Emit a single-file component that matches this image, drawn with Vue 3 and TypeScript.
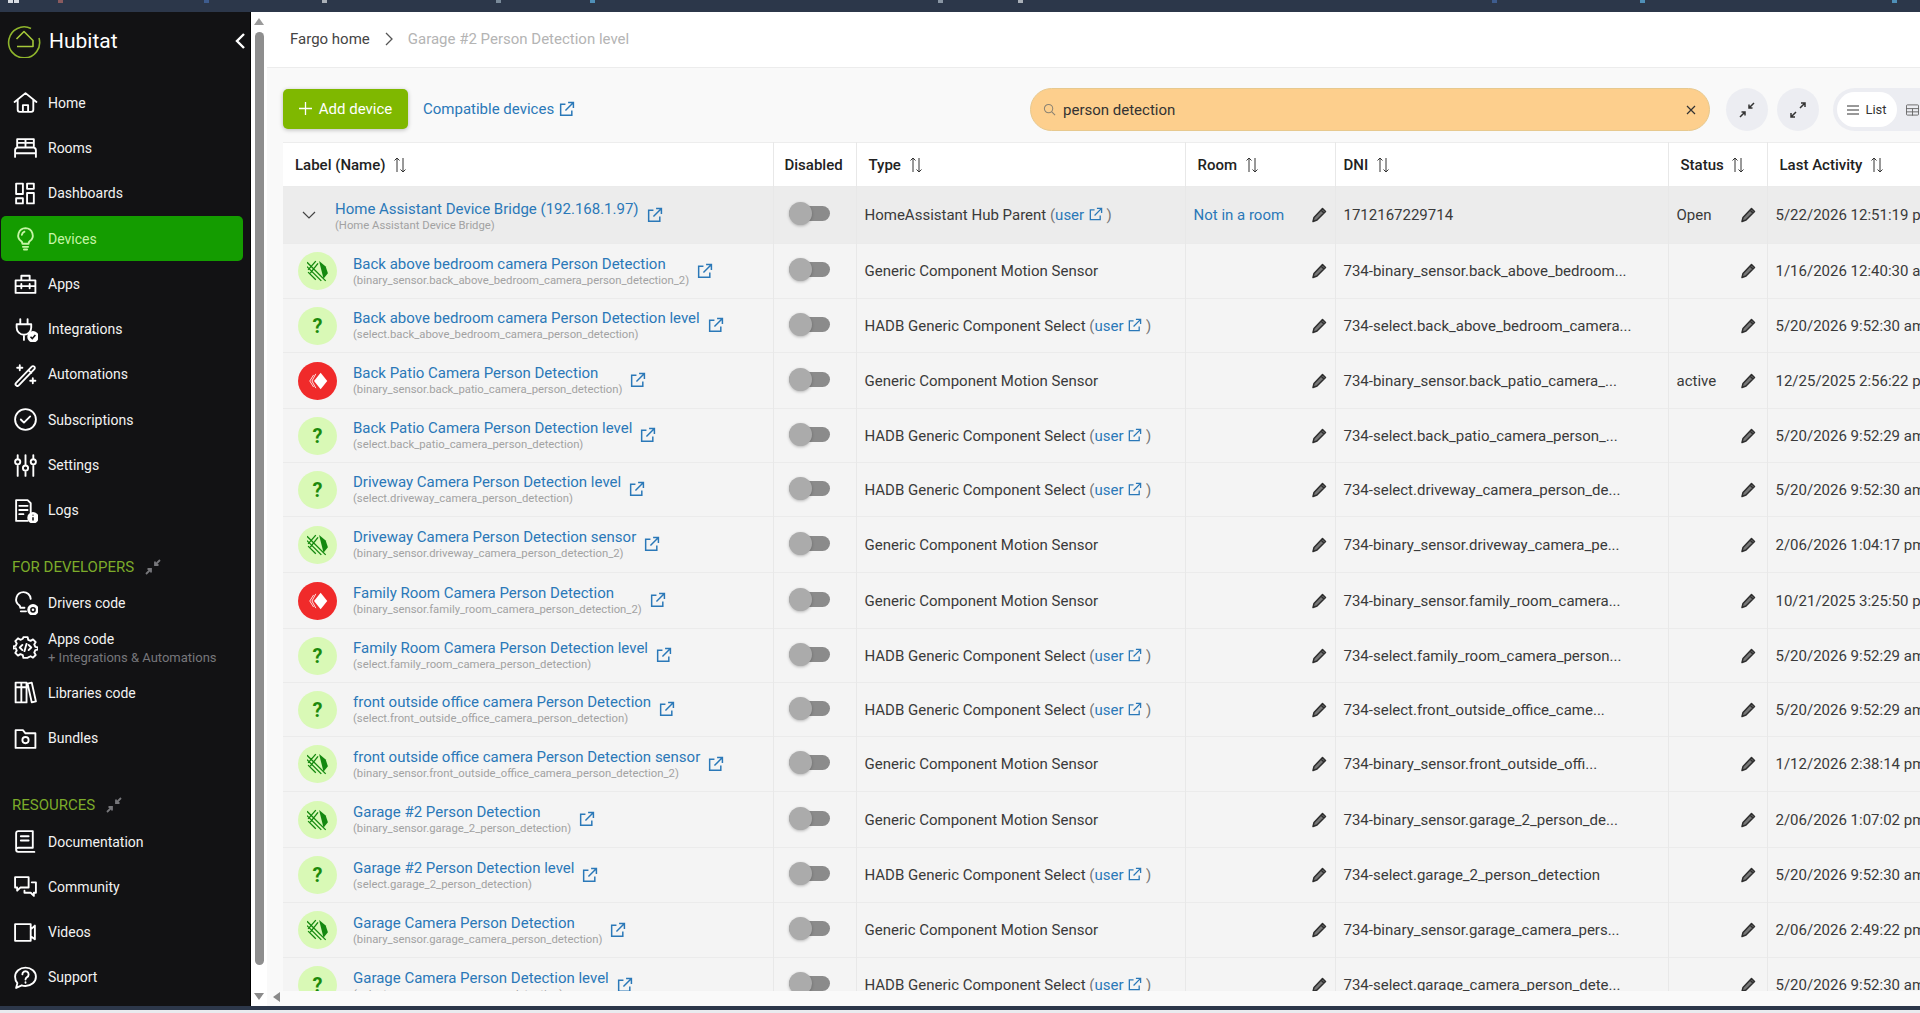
<template>
  <div class="screen">
    <div class="topbar">
      <i v-for="mark in topMarks" :key="mark.x" :style="{ left: mark.x + 'px', background: mark.color }"></i>
    </div>
    <div class="body">
      <aside class="sidebar">
        <div class="brand">
          <svg class="logo" viewBox="0 0 34 34" fill="none" stroke="#8fb52c" stroke-width="1.6">
            <path d="M24 4.500A15.500 15.500 0 1 0 32 14" />
            <path d="M9.500 15 17 7.500 26 16.500V22.500H10" stroke-linejoin="round" stroke="#a6c83a" />
          </svg>
          <span class="brand-name">Hubitat</span>
          <svg class="collapse" viewBox="0 0 12 18" fill="none" stroke="#fff" stroke-width="2.4"><path d="M10 2 3 9l7 7" /></svg>
        </div>

        <nav class="nav">
          <a v-for="item in mainNav" :key="item.label" class="nav-item" :class="{ active: item.label === 'Devices' }">
            <svg class="nav-icon" viewBox="0 0 24 24">
              <path class="ln" :d="item.d" />
              <template v-if="item.badge">
                <circle cx="19.2" cy="19" r="5.5" fill="#fff" />
                <path class="bd" :d="item.badge" />
              </template>
            </svg>
            <span>{{ item.label }}</span>
          </a>
        </nav>

        <div class="section-title dev">FOR DEVELOPERS
          <svg class="shrink" viewBox="0 0 16 16"><path :d="shrinkPath" /></svg>
        </div>
        <nav class="nav">
          <a v-for="item in devNav" :key="item.label" class="nav-item" :class="{ double: item.sub }">
            <svg class="nav-icon" viewBox="0 0 24 24">
              <path class="ln" :d="item.d" />
              <template v-if="item.badge">
                <circle cx="19.2" cy="19" r="5.5" fill="#fff" />
                <path class="bd" :d="item.badge" />
              </template>
            </svg>
            <span class="stack">{{ item.label }}<small v-if="item.sub">{{ item.sub }}</small></span>
          </a>
        </nav>

        <div class="section-title res">RESOURCES
          <svg class="shrink" viewBox="0 0 16 16"><path :d="shrinkPath" /></svg>
        </div>
        <nav class="nav">
          <a v-for="item in resourceNav" :key="item.label" class="nav-item">
            <svg class="nav-icon" viewBox="0 0 24 24"><path class="ln" :d="item.d" /></svg>
            <span>{{ item.label }}</span>
          </a>
        </nav>
      </aside>

      <div class="vscroll">
        <span class="arrow up"></span>
        <span class="thumb"></span>
        <span class="arrow down"></span>
      </div>

      <main class="main">
        <header class="crumbs">
          <span class="crumb-home">Fargo home</span>
          <svg class="crumb-sep" viewBox="0 0 8 14" fill="none" stroke="#555" stroke-width="1.3"><path d="m1 1 6 6-6 6" /></svg>
          <span class="crumb-page">Garage #2 Person Detection level</span>
        </header>

        <div class="toolbar">
          <div class="toolbar-left">
            <button class="add-btn">
              <svg viewBox="0 0 14 14" fill="none" stroke="#fff" stroke-width="1.4"><path d="M7 0v14M0 7h14" /></svg>
              Add device
            </button>
            <a class="compat">Compatible devices
              <svg class="ext" viewBox="0 0 16 16"><path :d="extPath" /></svg>
            </a>
          </div>
          <div class="search">
            <svg class="search-icon" viewBox="0 0 14 14" fill="none" stroke="#8a8272" stroke-width="1.1"><circle cx="6" cy="6" r="4.5" /><path d="m9.500 9.500 3.500 3.500" /></svg>
            <span class="search-text">person detection</span>
            <svg class="search-clear" viewBox="0 0 10 10" fill="none" stroke="#333" stroke-width="1.2"><path d="m1 1 8 8M9 1 1 9" /></svg>
          </div>
          <button class="round-btn first">
            <svg viewBox="0 0 16 16"><path :d="shrinkPath" /></svg>
          </button>
          <button class="round-btn">
            <svg viewBox="0 0 16 16"><path d="M10 6l5-5M11 1h4v4M6 10l-5 5M1 11v4h4" /></svg>
          </button>
          <div class="view-toggle">
            <span class="view-list">
              <svg viewBox="0 0 12 12" fill="none" stroke="#333" stroke-width="1"><path d="M0 2h12M0 6h12M0 10h12" /></svg>
              List
            </span>
            <svg class="view-grid" viewBox="0 0 14 12" fill="none" stroke="#666" stroke-width="1"><rect x="0.5" y="0.5" width="13" height="11" rx="1" /><path d="M0 4.500h14M0 8h14M7 4.500V12" /></svg>
          </div>
        </div>

        <div class="table-wrap">
          <table class="devices">
            <colgroup>
              <col style="width: 490px" />
              <col style="width: 83px" />
              <col style="width: 329px" />
              <col style="width: 150px" />
              <col style="width: 333px" />
              <col style="width: 99px" />
              <col style="width: 220px" />
            </colgroup>
            <thead>
              <tr>
                <th v-for="col in columns" :key="col">
                  {{ col }}
                  <svg v-if="col !== 'Disabled'" class="sort" viewBox="0 0 14 16"><path d="M4 15V1M1.500 3.500 4 1l2.500 2.500M10 1v14M7.500 12.500 10 15l2.500-2.500" /></svg>
                </th>
              </tr>
            </thead>
            <tbody>
              <tr v-for="row in rows" :key="row.name" :class="{ parent: row.kind === 'parent' }" :style="{ height: row.h + 'px' }">
                <td class="label-cell">
                  <div class="label-inner">
                    <svg v-if="row.kind === 'parent'" class="chevron" viewBox="0 0 14 8" fill="none" stroke="#444" stroke-width="1.2"><path d="m1 1 6 6 6-6" /></svg>
                    <span v-else class="dev-icon" :class="row.kind">
                      <template v-if="row.kind === 'unknown'">?</template>
                      <svg v-else-if="row.kind === 'motion'" viewBox="0 0 20 20">
                        <path d="M11 1l6 5 2 6-4 5z" fill="#14890f" />
                        <path d="m0 2 17 17M0 6l13 13M1 11l7 7M1 9l7-8M3 12l7-9" stroke="#14890f" stroke-width="1.2" fill="none" />
                      </svg>
                      <svg v-else viewBox="0 0 20 20">
                        <path d="M12.400 2.500 18.400 10l-6 7.500-6-7.500z" fill="#fff" />
                        <path d="M6 4.500 2.500 10 6 15.500M8 3.500 4.500 10 8 16.500" stroke="#fff" stroke-width="0.9" fill="none" opacity="0.85" />
                      </svg>
                    </span>
                    <div class="names">
                      <a class="name">{{ row.name }}</a>
                      <span class="entity">({{ row.entity }})</span>
                    </div>
                    <svg class="ext row-ext" viewBox="0 0 16 16"><path :d="extPath" /></svg>
                  </div>
                </td>
                <td class="toggle-cell"><span class="toggle"><i></i></span></td>
                <td>
                  {{ row.type }}
                  <span v-if="row.user" class="user">(<a>user <svg class="ext mini" viewBox="0 0 16 16"><path :d="extPath" /></svg></a> )</span>
                </td>
                <td>
                  <div class="edit-cell room">
                    <a v-if="row.kind === 'parent'">Not in a room</a>
                    <svg class="pencil" viewBox="0 0 16 16"><path :d="pencilPath" /></svg>
                  </div>
                </td>
                <td>{{ row.dni }}</td>
                <td class="status-cell">
                  <div class="edit-cell">
                    <span>{{ row.status }}</span>
                    <svg class="pencil" viewBox="0 0 16 16"><path :d="pencilPath" /></svg>
                  </div>
                </td>
                <td class="nowrap">{{ row.activity }}</td>
              </tr>
            </tbody>
          </table>
        </div>

        <div class="hscroll"><span class="arrow left"></span></div>
      </main>
    </div>
    <div class="bottombar"></div>
  </div>
</template>

<script setup lang="ts">
type Kind = 'parent' | 'motion' | 'unknown' | 'alert'

interface NavItem {
  label: string
  d: string
  badge?: string
  sub?: string
}

interface Row {
  kind: Kind
  name: string
  entity: string
  type: string
  user: boolean
  dni: string
  status: string
  activity: string
  h: number
}

const extPath = 'M7 3H2.500v10.500H13V9M9.500 1.500h5v5M14.500 1.500 7 9'
const pencilPath = 'M11.500 1.500 14.500 4.500 6 13 2 14.500 3 10.500zM10 3l3 3'
const shrinkPath = 'M15 1 10 6M10 2.500V6h3.500M1 15l5-5M2.500 10H6v3.500'

// clipped taskbar icons peeking in at the top edge
const topMarks = [
  { x: 8, color: '#d8dce2' },
  { x: 14, color: '#d8dce2' },
  { x: 58, color: '#8a5a5e' },
  { x: 204, color: '#3e5c8e' },
  { x: 322, color: '#aab0b8' },
  { x: 496, color: '#7a8a9a' },
  { x: 590, color: '#4f8fb8' },
  { x: 938, color: '#8a96a4' },
  { x: 1018, color: '#aab0b8' },
  { x: 1492, color: '#3e5c8e' },
  { x: 1640, color: '#4f8fb8' },
  { x: 1892, color: '#4f8fb8' },
]

const mainNav: NavItem[] = [
  { label: 'Home', d: 'M1.500 11.500 12 3l10.500 8.500M4.500 9.500V19a2 2 0 0 0 2 2h11a2 2 0 0 0 2-2V9.500M9.500 21v-6.500h5V21' },
  { label: 'Rooms', d: 'M4 11V4h16v7M2 21v-6a3 3 0 0 1 2-3h16a3 3 0 0 1 2 3v6M2 17.500h20M12 4v7M5.500 7.500h5M13.500 7.500h5' },
  { label: 'Dashboards', d: 'M3 2.500h6.500v10H3zM13.500 2.500H20v5h-6.500zM3 16.500h6.500v5H3zM13.500 11.500H20v10h-6.500z' },
  { label: 'Devices', d: 'M12 2a7 7 0 0 0-4 12.700c.8.700 1 1.500 1 2.300h6c0-.8.2-1.600 1-2.300A7 7 0 0 0 12 2zM9.500 20h5M10.500 22.500h3M8.500 8.500A4 4 0 0 1 11 5.500' },
  { label: 'Apps', d: 'M2.500 9h19v12h-19zM8 9V4.500h8V9M2.500 14.500h19M8 12.500v4M16 12.500v4' },
  { label: 'Integrations', d: 'M7 2v5M14 2v5M3.500 7h14v3a7 7 0 0 1-14 0zM10.500 17v5', badge: 'm16.800 19 1.700 1.700 3-3.400' },
  { label: 'Automations', d: 'M3 20 18 4.500a1.500 1.500 0 0 1 2.500 2.300L5.500 22.500a1.500 1.500 0 0 1-2.500-2.500zM15 8l2.500 2.500M6.500 3v5M4 5.500h5M19 15.500v5M16.500 18h5' },
  { label: 'Subscriptions', d: 'M12 2a10 10 0 1 0 0 20 10 10 0 0 0 0-20zM7.500 12l3 3 6-6' },
  { label: 'Settings', d: 'M4.500 2v4M4.500 11v11M12 2v10M12 17v5M19.500 2v4M19.500 11v11M4.500 6a2.500 2.500 0 1 0 0 5 2.500 2.500 0 0 0 0-5zM12 12a2.500 2.500 0 1 0 0 5 2.500 2.500 0 0 0 0-5zM19.500 6a2.500 2.500 0 1 0 0 5 2.500 2.500 0 0 0 0-5z' },
  { label: 'Logs', d: 'M14 22H3V2h11l3 3v9M6 7.500h8M6 11.500h8M6 15.500h4', badge: 'M19.200 18.500v3.200M19.200 16v.8' },
]

const devNav: NavItem[] = [
  { label: 'Drivers code', d: 'M10 2a7 7 0 0 0-4 12.700c.8.700 1 1.500 1 2.300h4M7.500 20.500h5M10 2a7 7 0 0 1 7 6.500', badge: 'M19.200 17a2 2 0 1 0 0 4 2 2 0 0 0 0-4z' },
  { label: 'Apps code', sub: '+ Integrations & Automations', d: 'M10 2h4l.6 2.600 2.300 1 2.300-1.400 2.600 2.600-1.400 2.300 1 2.300 2.600.6v2l-2.600.6-1 2.300 1.400 2.300-2.600 2.600-2.300-1.400-2.300 1L14 22h-4l-.6-2.600-2.300-1-2.300 1.400-2.600-2.600 1.400-2.300-1-2.300L0 13v-2l2.600-.6 1-2.300-1.400-2.300 2.600-2.600 2.300 1.400 2.300-1zM9 9.500 6.500 12 9 14.500M15 9.500l2.500 2.500-2.500 2.500M13 8.500l-2 7' },
  { label: 'Libraries code', d: 'M2.500 2.500H8v19H2.500zM8 2.500h5v19H8zM2.500 7h10.500M14 3.500l4-1 4 18-4 1z' },
  { label: 'Bundles', d: 'M2.500 4h7l2.500 3h9.500v14h-19zM12 10.500a3 3 0 1 0 0 6 3 3 0 0 0 0-6z' },
]

const resourceNav: NavItem[] = [
  { label: 'Documentation', d: 'M19 2H5a2 2 0 0 0-2 2v16a2 2 0 0 0 2 2h15.500M19 2v16H5a2 2 0 0 0-2 2M7.500 7h7.500M7.500 11h7.500' },
  { label: 'Community', d: 'M2 3h13v10H7l-3 3v-3H2zM18 8h4v10h-2v3l-3-3h-6v-2' },
  { label: 'Videos', d: 'M2 4h15v16H2zM21 5.500v13l-4-3M17 9l4-3.500' },
  { label: 'Support', d: 'M12 2.500c5.500 0 10 3.800 10 8.800s-4.500 8.800-10 8.800c-1.300 0-2.500-.2-3.600-.6L3 22l1.200-4.600C2.800 15.900 2 13.700 2 11.300 2 6.300 6.500 2.500 12 2.500zM9 9a3 3 0 1 1 4.500 2.600c-1 .6-1.500 1.200-1.500 2.400M12 16.500v.5' },
]

const columns = ['Label (Name)', 'Disabled', 'Type', 'Room', 'DNI', 'Status', 'Last Activity']

const motionType = 'Generic Component Motion Sensor'
const selectType = 'HADB Generic Component Select'

const rows: Row[] = [
  { kind: 'parent', name: 'Home Assistant Device Bridge (192.168.1.97)', entity: 'Home Assistant Device Bridge', type: 'HomeAssistant Hub Parent', user: true, dni: '1712167229714', status: 'Open', activity: '5/22/2026 12:51:19 pm', h: 57 },
  { kind: 'motion', name: 'Back above bedroom camera Person Detection', entity: 'binary_sensor.back_above_bedroom_camera_person_detection_2', type: motionType, user: false, dni: '734-binary_sensor.back_above_bedroom...', status: '', activity: '1/16/2026 12:40:30 am', h: 55 },
  { kind: 'unknown', name: 'Back above bedroom camera Person Detection level', entity: 'select.back_above_bedroom_camera_person_detection', type: selectType, user: true, dni: '734-select.back_above_bedroom_camera...', status: '', activity: '5/20/2026 9:52:30 am', h: 54 },
  { kind: 'alert', name: 'Back Patio Camera Person Detection', entity: 'binary_sensor.back_patio_camera_person_detection', type: motionType, user: false, dni: '734-binary_sensor.back_patio_camera_...', status: 'active', activity: '12/25/2025 2:56:22 pm', h: 56 },
  { kind: 'unknown', name: 'Back Patio Camera Person Detection level', entity: 'select.back_patio_camera_person_detection', type: selectType, user: true, dni: '734-select.back_patio_camera_person_...', status: '', activity: '5/20/2026 9:52:29 am', h: 54 },
  { kind: 'unknown', name: 'Driveway Camera Person Detection level', entity: 'select.driveway_camera_person_detection', type: selectType, user: true, dni: '734-select.driveway_camera_person_de...', status: '', activity: '5/20/2026 9:52:30 am', h: 54 },
  { kind: 'motion', name: 'Driveway Camera Person Detection sensor', entity: 'binary_sensor.driveway_camera_person_detection_2', type: motionType, user: false, dni: '734-binary_sensor.driveway_camera_pe...', status: '', activity: '2/06/2026 1:04:17 pm', h: 56 },
  { kind: 'alert', name: 'Family Room Camera Person Detection', entity: 'binary_sensor.family_room_camera_person_detection_2', type: motionType, user: false, dni: '734-binary_sensor.family_room_camera...', status: '', activity: '10/21/2025 3:25:50 pm', h: 56 },
  { kind: 'unknown', name: 'Family Room Camera Person Detection level', entity: 'select.family_room_camera_person_detection', type: selectType, user: true, dni: '734-select.family_room_camera_person...', status: '', activity: '5/20/2026 9:52:29 am', h: 54 },
  { kind: 'unknown', name: 'front outside office camera Person Detection', entity: 'select.front_outside_office_camera_person_detection', type: selectType, user: true, dni: '734-select.front_outside_office_came...', status: '', activity: '5/20/2026 9:52:29 am', h: 54 },
  { kind: 'motion', name: 'front outside office camera Person Detection sensor', entity: 'binary_sensor.front_outside_office_camera_person_detection_2', type: motionType, user: false, dni: '734-binary_sensor.front_outside_offi...', status: '', activity: '1/12/2026 2:38:14 pm', h: 55 },
  { kind: 'motion', name: 'Garage #2 Person Detection', entity: 'binary_sensor.garage_2_person_detection', type: motionType, user: false, dni: '734-binary_sensor.garage_2_person_de...', status: '', activity: '2/06/2026 1:07:02 pm', h: 56 },
  { kind: 'unknown', name: 'Garage #2 Person Detection level', entity: 'select.garage_2_person_detection', type: selectType, user: true, dni: '734-select.garage_2_person_detection', status: '', activity: '5/20/2026 9:52:30 am', h: 55 },
  { kind: 'motion', name: 'Garage Camera Person Detection', entity: 'binary_sensor.garage_camera_person_detection', type: motionType, user: false, dni: '734-binary_sensor.garage_camera_pers...', status: '', activity: '2/06/2026 2:49:22 pm', h: 55 },
  { kind: 'unknown', name: 'Garage Camera Person Detection level', entity: 'select.garage_camera_person_detection', type: selectType, user: true, dni: '734-select.garage_camera_person_dete...', status: '', activity: '5/20/2026 9:52:30 am', h: 55 },
]
</script>

<style>
html,
body {
  margin: 0;
  height: 100%;
  overflow: hidden;
}
</style>

<style scoped>
.screen {
  width: 1920px;
  height: 1013px;
  display: flex;
  flex-direction: column;
  overflow: hidden;
  font-family: Roboto, "Liberation Sans", sans-serif;
  font-size: 15px;
  color: #333;
  background: #e9ebef;
}

.topbar {
  position: relative;
  height: 12px;
  flex: none;
  background: #2c374a;
}

.topbar i {
  position: absolute;
  top: 0;
  width: 5px;
  height: 3px;
}

.bottombar {
  height: 4px;
  flex: none;
  margin-bottom: 3px;
  background: #2c374a;
}

.body {
  flex: 1;
  min-height: 0;
  display: flex;
  background: #fff;
}

/* sidebar */
.sidebar {
  width: 251px;
  flex: none;
  background: #121214;
  color: #fff;
  border-right: 1px solid #000;
  box-sizing: border-box;
  padding-top: 13px;
}

.brand {
  display: flex;
  align-items: center;
  height: 32px;
  padding-left: 7px;
  margin-bottom: 23px;
}

.logo {
  width: 34px;
  height: 34px;
}

.brand-name {
  margin-left: 8px;
  font-size: 21px;
}

.collapse {
  width: 12px;
  height: 18px;
  margin-left: auto;
  margin-right: 4px;
}

.nav-item {
  display: flex;
  align-items: center;
  height: 45.3px;
  margin: 0 7px 0 1px;
  padding-left: 12px;
  border-radius: 5px;
  color: #f2f2f2;
  font-size: 14px;
}

.nav-item.active {
  background: #149c00;
  color: #c6f5a6;
}

.nav-item.active .ln {
  stroke: #c6f5a6;
}

.nav-item.double {
  height: 45px;
}

.nav-icon {
  width: 25px;
  height: 25px;
  flex: none;
  margin-right: 10px;
}

.ln {
  fill: none;
  stroke: #fff;
  stroke-width: 1.8;
  stroke-linejoin: round;
  stroke-linecap: round;
}

.bd {
  fill: none;
  stroke: #121214;
  stroke-width: 1.5;
}

.stack {
  display: flex;
  flex-direction: column;
  gap: 3px;
}

.stack small {
  color: #77777b;
  font-size: 13px;
}

.section-title {
  display: flex;
  align-items: center;
  gap: 11px;
  height: 20px;
  padding-left: 12px;
  color: #7cab2a;
  font-size: 15px;
}

.section-title.dev {
  margin-top: 24px;
  margin-bottom: 3px;
}

.section-title.res {
  margin-top: 34px;
  margin-bottom: 4px;
}

.shrink {
  width: 16px;
  height: 16px;
  fill: none;
  stroke: #77777b;
  stroke-width: 1.8;
}

/* scrollbar strips */
.vscroll {
  width: 16px;
  flex: none;
  display: flex;
  flex-direction: column;
  align-items: center;
  background: #fff;
  padding-top: 6px;
  box-sizing: border-box;
}

.thumb {
  display: block;
  width: 9px;
  height: 933px;
  margin-top: 7px;
  border-radius: 5px;
  background: #8e8e8e;
}

.arrow {
  display: block;
  width: 0;
  height: 0;
  border-style: solid;
  border-color: transparent;
}

.arrow.up {
  border-width: 0 5px 7px;
  border-bottom-color: #9a9a9a;
}

.arrow.down {
  margin-top: 28px;
  border-width: 7px 5px 0;
  border-top-color: #8a8a8a;
}

.arrow.left {
  margin-top: -3px;
  border-width: 5px 7px 5px 0;
  border-right-color: #8a8a8a;
}

/* main */
.main {
  flex: 1;
  min-width: 0;
  display: flex;
  flex-direction: column;
  background: #f9f9f9;
}

.crumbs {
  height: 56px;
  flex: none;
  display: flex;
  align-items: center;
  padding: 0 23px 2px;
  box-sizing: border-box;
  background: #fff;
  border-bottom: 1px solid #ececec;
}

.crumb-home {
  color: #444;
}

.crumb-sep {
  width: 8px;
  height: 14px;
  margin: 0 15px;
}

.crumb-page {
  color: #b4b4b4;
}

.toolbar {
  height: 74px;
  flex: none;
  display: flex;
  align-items: center;
  padding: 7px 0 0 16px;
  box-sizing: border-box;
}

.toolbar-left {
  width: 747px;
  flex: none;
  display: flex;
  align-items: center;
}

.add-btn {
  width: 125px;
  height: 40px;
  display: flex;
  align-items: center;
  justify-content: center;
  gap: 7px;
  border: 0;
  border-radius: 5px;
  background: #7fb800;
  color: #fff;
  font: inherit;
  white-space: nowrap;
  box-shadow: 0 1px 4px rgba(0, 0, 0, 0.25);
}

.add-btn svg {
  width: 13px;
  height: 13px;
}

.compat {
  margin: 1px 0 0 15px;
  display: flex;
  align-items: center;
  gap: 4px;
  color: #2a78b8;
  white-space: nowrap;
}

.ext {
  fill: none;
  stroke: #2a78b8;
  stroke-width: 1.4;
}

.compat .ext {
  width: 17px;
  height: 17px;
}

.search {
  width: 680px;
  height: 43px;
  flex: none;
  margin-top: 2px;
  box-sizing: border-box;
  display: flex;
  align-items: center;
  padding: 0 12px;
  border-radius: 22px;
  border: 1px solid #e7c98f;
  background: #fdcf8d;
  color: #333;
}

.search-icon {
  width: 13px;
  height: 13px;
  margin-right: 7px;
}

.search-clear {
  width: 10px;
  height: 10px;
  margin-left: auto;
  margin-right: 1px;
}

.round-btn {
  width: 42px;
  height: 43px;
  flex: none;
  margin: 2px 0 0 9px;
  display: flex;
  align-items: center;
  justify-content: center;
  border: 0;
  padding: 0;
  border-radius: 50%;
  background: #ecedf2;
}

.round-btn.first {
  margin-left: 16px;
}

.round-btn svg {
  width: 16px;
  height: 16px;
  fill: none;
  stroke: #333;
  stroke-width: 1.5;
}

.view-toggle {
  margin: 2px 0 0 14px;
  width: 110px;
  flex: none;
  height: 43px;
  display: flex;
  align-items: center;
  padding-left: 4px;
  box-sizing: border-box;
  border-radius: 22px 0 0 22px;
  background: #ecedf2;
}

.view-list {
  width: 60px;
  height: 35px;
  flex: none;
  display: flex;
  align-items: center;
  justify-content: center;
  gap: 6px;
  border-radius: 18px;
  background: #fff;
  font-size: 13px;
}

.view-list svg {
  width: 12px;
  height: 12px;
}

.view-grid {
  width: 13px;
  height: 12px;
  flex: none;
  margin-left: 9px;
}

/* table */
.table-wrap {
  flex: 1;
  min-height: 0;
  overflow: hidden;
  padding-left: 16px;
}

.devices {
  width: 1704px;
  table-layout: fixed;
  border-collapse: collapse;
  border-top: 1px solid #ededed;
}

.devices th {
  height: 44px;
  padding: 0 0 0 12px;
  box-sizing: border-box;
  background: #fff;
  color: #222;
  font-weight: 500;
  text-align: left;
  border-right: 1px solid #e8e8e8;
  white-space: nowrap;
}

.devices th:nth-child(2) {
  padding-left: 11px;
}

.devices th:nth-child(5) {
  padding-left: 8px;
}

.sort {
  width: 14px;
  height: 16px;
  margin-left: 4px;
  vertical-align: -3px;
  fill: none;
  stroke: #333;
  stroke-width: 1;
}

.devices td {
  padding: 0 8px;
  box-sizing: border-box;
  background: #f4f4f4;
  border-top: 1px solid #ebebeb;
  border-right: 1px solid #e8e8e8;
  white-space: nowrap;
  overflow: hidden;
  color: #3a3a3a;
}

.devices tr.parent td {
  background: #ececec;
}

.label-inner {
  display: flex;
  align-items: center;
}

.chevron {
  width: 14px;
  height: 8px;
  margin: 0 19px 0 8px;
  flex: none;
}

.parent .label-inner {
  padding-left: 3px;
}

.parent .names {
  margin-top: 2px;
}

.dev-icon {
  width: 39px;
  height: 38px;
  flex: none;
  margin: 0 16px 0 7px;
  border-radius: 50%;
  display: flex;
  align-items: center;
  justify-content: center;
  background: #d9f9b6;
  color: #1d8a0c;
  font-size: 20px;
  font-weight: 700;
}

.dev-icon svg {
  width: 22px;
  height: 22px;
}

.dev-icon.alert {
  background: #f02a2a;
}

.names {
  display: flex;
  flex-direction: column;
  gap: 1px;
}

.name {
  color: #2a78b8;
  line-height: 17px;
}

.entity {
  color: #a2a2a2;
  font-size: 11.3px;
  line-height: 13px;
}

.row-ext {
  width: 17px;
  height: 17px;
  margin-left: 7px;
  flex: none;
}

.devices td.toggle-cell {
  padding-left: 15px;
}

.toggle {
  position: relative;
  display: block;
  width: 41px;
  height: 15px;
  margin-top: -3px;
  border-radius: 8px;
  background: #8b8b8b;
}

.toggle i {
  position: absolute;
  left: 0;
  top: -4px;
  width: 23px;
  height: 23px;
  border-radius: 50%;
  background: #ababab;
  box-shadow: 0 1px 3px rgba(0, 0, 0, 0.25);
}

.user {
  color: #777;
}

.user a {
  color: #2a78b8;
}

.mini {
  width: 15px;
  height: 15px;
  vertical-align: -2px;
}

.edit-cell {
  display: flex;
  align-items: center;
  justify-content: space-between;
  padding-right: 3px;
}

.edit-cell.room {
  padding-right: 0;
}

.edit-cell a {
  color: #2a78b8;
}

.pencil {
  width: 16px;
  height: 16px;
  flex: none;
  margin-left: auto;
  fill: #777;
  stroke: #2e2e2e;
  stroke-width: 1.5;
  stroke-linejoin: round;
}

.hscroll {
  height: 15px;
  flex: none;
  padding-left: 6px;
  display: flex;
  align-items: center;
  background: #fafafa;
}
</style>
